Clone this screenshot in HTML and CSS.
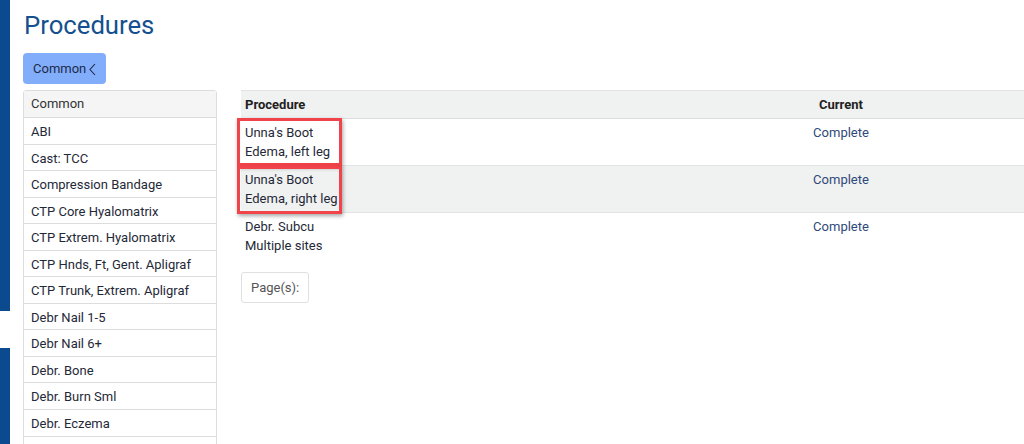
FILE: index.html
```html
<!DOCTYPE html>
<html>
<head>
    <title>Procedures</title>
    <link rel="stylesheet" href="styles.css">
</head>
<body>
    <div class="frame">
        <div class="rail">
            <div class="rail-top"></div>
            <div class="rail-bottom"></div>
        </div>
        <div class="content">
            <h1>Procedures</h1>
            <button class="group-btn">Common
                <svg class="chev" width="7" height="13" viewBox="0 0 7 13"><path d="M6 1 L1 6.5 L6 12" fill="none" stroke="#1c2a48" stroke-width="1.1"/></svg>
            </button>
            <div class="layout">
                <div class="list">
                    <div class="list-head">Common</div>
                    <div class="list-item">ABI</div>
                    <div class="list-item">Cast: TCC</div>
                    <div class="list-item">Compression Bandage</div>
                    <div class="list-item">CTP Core Hyalomatrix</div>
                    <div class="list-item">CTP Extrem. Hyalomatrix</div>
                    <div class="list-item">CTP Hnds, Ft, Gent. Apligraf</div>
                    <div class="list-item">CTP Trunk, Extrem. Apligraf</div>
                    <div class="list-item">Debr Nail 1-5</div>
                    <div class="list-item">Debr Nail 6+</div>
                    <div class="list-item">Debr. Bone</div>
                    <div class="list-item">Debr. Burn Sml</div>
                    <div class="list-item">Debr. Eczema</div>
                    <div class="list-item"></div>
                </div>
                <div class="results">
                    <table class="proc-table">
                        <thead>
                            <tr>
                                <th class="col-proc">Procedure</th>
                                <th class="col-cur">Current</th>
                                <th class="col-rest"></th>
                            </tr>
                        </thead>
                        <tbody>
                            <tr>
                                <td class="col-proc"><span class="mark mark-left">Unna's Boot<br>Edema, left leg</span></td>
                                <td class="col-cur">Complete</td>
                                <td></td>
                            </tr>
                            <tr class="alt">
                                <td class="col-proc"><span class="mark mark-right">Unna's Boot<br>Edema, right leg</span></td>
                                <td class="col-cur">Complete</td>
                                <td></td>
                            </tr>
                            <tr>
                                <td class="col-proc">Debr. Subcu<br>Multiple sites</td>
                                <td class="col-cur">Complete</td>
                                <td></td>
                            </tr>
                        </tbody>
                    </table>
                    <div class="pager">Page(s):</div>
                </div>
            </div>
        </div>
    </div>
</body>
</html>
```

FILE: styles.css
```css
body {
    margin: 0;
    font-family: Roboto, "Liberation Sans", Arial, sans-serif;
    font-size: 13px;
    color: #222;
    background: #fff;
    overflow: hidden;
}

.frame {
    display: flex;
    height: 444px;
}

.rail {
    width: 10px;
    flex-shrink: 0;
    display: flex;
    flex-direction: column;
}

.rail-top {
    height: 311px;
    background-color: #0b4a8e;
}

.rail-bottom {
    margin-top: 37px;
    flex: 1;
    background-color: #0b4a8e;
}

.content {
    flex: 1;
    padding-left: 13px;
}

h1 {
    margin: 9px 0 0 1px;
    font-size: 25.7px;
    font-weight: 400;
    line-height: 32px;
    color: #14508f;
}

.group-btn {
    margin-top: 12px;
    height: 31px;
    width: 83px;
    padding: 0 0 0 10px;
    display: flex;
    align-items: center;
    gap: 3px;
    border: none;
    border-radius: 4px;
    background-color: #82adfb;
    color: #1c2a48;
    font-family: inherit;
    font-size: 13px;
}

.chev {
    margin-top: 1px;
}

.layout {
    display: flex;
    gap: 24px;
    margin-top: 6px;
}

.list {
    width: 192px;
    border: 1px solid #ddd;
    border-radius: 3px 3px 0 0;
    flex-shrink: 0;
}

.list-head {
    height: 26px;
    line-height: 25px;
    padding-left: 7px;
    background-color: #f5f5f5;
    border-bottom: 1px solid #ddd;
    color: #333;
}

.list-item {
    box-sizing: border-box;
    height: 26.55px;
    line-height: 27px;
    padding-left: 7px;
    border-bottom: 1px solid #ddd;
    color: #1f2937;
}

.results {
    flex: 1;
}

.proc-table {
    width: 100%;
    border-collapse: collapse;
}

.proc-table th {
    height: 27px;
    padding: 0 4px;
    background-color: #f0f1f1;
    border-top: 1px solid #e2e4e4;
    border-bottom: 1px solid #dcdede;
    text-align: left;
    font-weight: 700;
    color: #222;
}

.proc-table td {
    height: 42px;
    padding: 4px 4px 0;
    vertical-align: top;
    line-height: 19px;
    border-bottom: 1px solid #e2e4e4;
    color: #1f2937;
}

.proc-table tbody tr:last-child td {
    border-bottom: none;
}

.proc-table .alt td {
    background-color: #f0f1f1;
}

.col-proc {
    width: 528px;
}

.proc-table .col-cur {
    width: 120px;
    text-align: center;
}

.proc-table td.col-cur {
    color: #2f4a7a;
}

.mark {
    position: relative;
    display: inline-block;
}

.mark::after {
    content: "";
    position: absolute;
    top: -5px;
    bottom: -5px;
    left: -8px;
    border: 3px solid #f0444a;
    box-shadow: 1px 2px 4px rgba(0, 0, 0, 0.35);
}

.mark-left::after {
    right: -12px;
}

.mark-right::after {
    top: -4px;
    bottom: -6px;
    right: -4px;
}

.pager {
    display: inline-block;
    margin-top: 13px;
    height: 29px;
    line-height: 29px;
    padding: 0 9px;
    border: 1px solid #e0e0e0;
    border-radius: 3px;
    color: #555;
}
```
